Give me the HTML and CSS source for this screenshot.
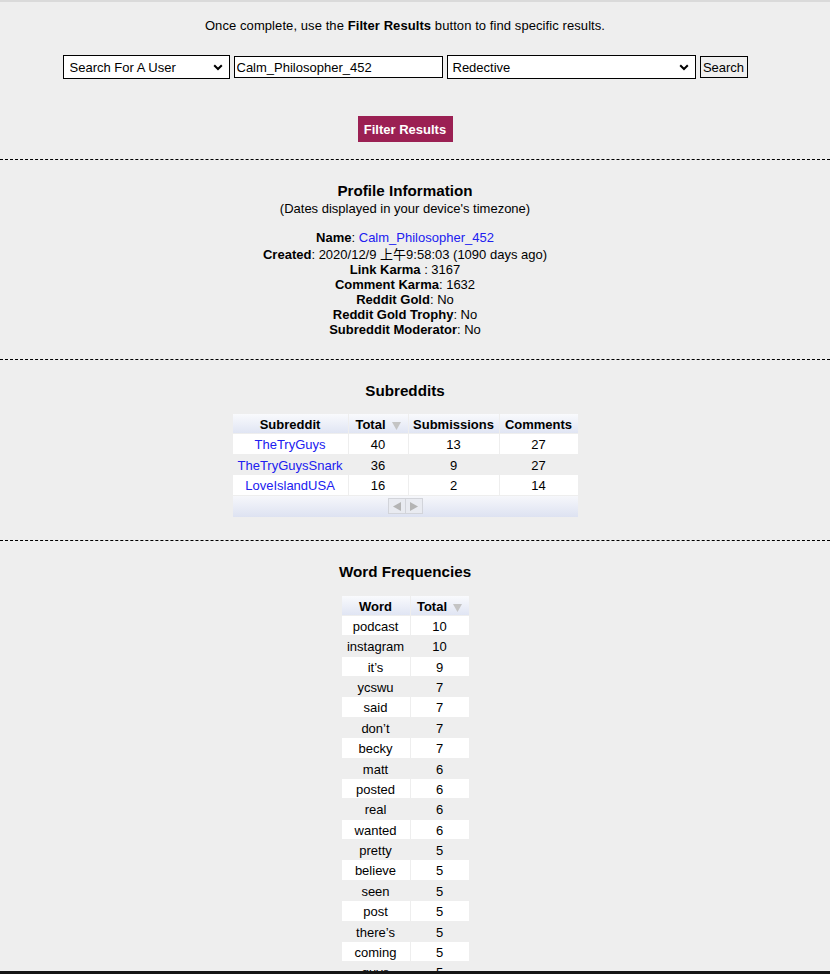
FILE: index.html
```html
<!DOCTYPE html>
<html lang="en">
<head>
<meta charset="utf-8">
<title>User Analysis</title>
<link rel="stylesheet" href="styles.css">
</head>
<body>
<header class="top">
  <p class="intro">Once complete, use the <b>Filter Results</b> button to find specific results.</p>
  <div class="controls">
    <span class="sel sel-mode">
      <select><option>Search For A User</option></select>
      <svg class="chev" width="10" height="7" viewBox="0 0 10 7"><polyline points="1.2,1.2 5,5 8.8,1.2" fill="none" stroke="#000" stroke-width="2"/></svg>
    </span>
    <input class="user" type="text" value="Calm_Philosopher_452">
    <span class="sel sel-sub">
      <select><option>Redective</option></select>
      <svg class="chev" width="10" height="7" viewBox="0 0 10 7"><polyline points="1.2,1.2 5,5 8.8,1.2" fill="none" stroke="#000" stroke-width="2"/></svg>
    </span>
    <button class="search" type="button">Search</button>
  </div>
  <div class="filter-row"><button class="filter" type="button">Filter Results</button></div>
</header>

<section class="section profile">
  <h3>Profile Information</h3>
  <div class="note">(Dates displayed in your device's timezone)</div>
  <div class="kv first"><b>Name</b>: <a href="#">Calm_Philosopher_452</a></div>
  <div class="kv created"><b>Created</b>: 2020/12/9 上午9:58:03 (1090 days ago)</div>
  <div class="kv"><b>Link Karma</b> : 3167</div>
  <div class="kv"><b>Comment Karma</b>: 1632</div>
  <div class="kv"><b>Reddit Gold</b>: No</div>
  <div class="kv"><b>Reddit Gold Trophy</b>: No</div>
  <div class="kv"><b>Subreddit Moderator</b>: No</div>
</section>

<section class="section">
  <h3>Subreddits</h3>
  <table class="grid subs">
    <thead>
      <tr>
        <th class="c1">Subreddit</th>
        <th class="c2">Total<svg class="arrow" width="9" height="8" viewBox="0 0 9 8"><path d="M0 0H9L4.5 8Z" fill="#c4c4c4"/></svg></th>
        <th class="c3">Submissions</th>
        <th class="c4">Comments</th>
      </tr>
    </thead>
    <tbody>
      <tr><td><a href="#">TheTryGuys</a></td><td>40</td><td>13</td><td>27</td></tr>
      <tr><td><a href="#">TheTryGuysSnark</a></td><td>36</td><td>9</td><td>27</td></tr>
      <tr><td><a href="#">LoveIslandUSA</a></td><td>16</td><td>2</td><td>14</td></tr>
    </tbody>
    <tfoot>
      <tr><td colspan="4">
        <div class="pager">
          <span class="pg"><svg width="8" height="9" viewBox="0 0 8 9"><path d="M8 0V9L0 4.5Z" fill="#b4b4b4"/></svg></span>
          <span class="pg"><svg width="8" height="9" viewBox="0 0 8 9"><path d="M0 0V9L8 4.5Z" fill="#b4b4b4"/></svg></span>
        </div>
      </td></tr>
    </tfoot>
  </table>
</section>

<section class="section">
  <h3>Word Frequencies</h3>
  <table class="grid words">
    <thead>
      <tr>
        <th class="w1">Word</th>
        <th class="w2">Total<svg class="arrow" width="9" height="8" viewBox="0 0 9 8"><path d="M0 0H9L4.5 8Z" fill="#c4c4c4"/></svg></th>
      </tr>
    </thead>
    <tbody>
      <tr><td>podcast</td><td>10</td></tr>
      <tr><td>instagram</td><td>10</td></tr>
      <tr><td>it’s</td><td>9</td></tr>
      <tr><td>ycswu</td><td>7</td></tr>
      <tr><td>said</td><td>7</td></tr>
      <tr><td>don’t</td><td>7</td></tr>
      <tr><td>becky</td><td>7</td></tr>
      <tr><td>matt</td><td>6</td></tr>
      <tr><td>posted</td><td>6</td></tr>
      <tr><td>real</td><td>6</td></tr>
      <tr><td>wanted</td><td>6</td></tr>
      <tr><td>pretty</td><td>5</td></tr>
      <tr><td>believe</td><td>5</td></tr>
      <tr><td>seen</td><td>5</td></tr>
      <tr><td>post</td><td>5</td></tr>
      <tr><td>there’s</td><td>5</td></tr>
      <tr><td>coming</td><td>5</td></tr>
      <tr><td>guys</td><td>5</td></tr>
      <tr><td>time</td><td>5</td></tr>
      <tr><td>people</td><td>4</td></tr>
    </tbody>
  </table>
</section>

<div class="bottombar"></div>
</body>
</html>
```

FILE: styles.css
```css
html {
  background: #eeeeee;
}

body {
  margin: 0;
  background: #eeeeee;
  color: #000;
  font-family: "Liberation Sans", Arial, "Noto Sans CJK SC", sans-serif;
  font-size: 13px;
  line-height: 15px;
  border-top: 2px solid #dadada;
}

a {
  color: #2020f0;
  text-decoration: none;
}

/* top area */
.top {
  padding: 16px 20px 17px 0;
  text-align: center;
}

.intro {
  margin: 0;
  line-height: 15px;
  letter-spacing: 0.08px;
}

.controls {
  margin-top: 22px;
  height: 24px;
  display: flex;
  justify-content: center;
  align-items: center;
  gap: 4px;
}

.sel {
  position: relative;
  display: block;
  height: 24px;
}

.sel select {
  appearance: none;
  -webkit-appearance: none;
  display: block;
  height: 24px;
  margin: 0;
  border: 1px solid #000;
  border-radius: 0;
  background: #fff;
  color: #000;
  font-family: "Liberation Sans", Arial, sans-serif;
  font-size: 13px;
  padding: 0 20px 0 5px;
  box-sizing: border-box;
}

.sel-mode select {
  width: 167px;
  padding-left: 6px;
}

.sel-sub select {
  width: 249px;
}

.chev {
  position: absolute;
  right: 7px;
  top: 9px;
  pointer-events: none;
}

.user {
  width: 209px;
  height: 22px;
  box-sizing: border-box;
  margin: 0;
  border: 1px solid #000;
  border-radius: 0;
  padding: 0 2px;
  background: #fff;
  font-family: "Liberation Sans", Arial, sans-serif;
  font-size: 13px;
  color: #000;
}

.search {
  width: 48px;
  height: 22px;
  box-sizing: border-box;
  margin: 0;
  padding: 0;
  border: 1px solid #000;
  border-radius: 0;
  background: #efefef;
  font-family: "Liberation Sans", Arial, sans-serif;
  font-size: 13px;
  color: #000;
}

.filter-row {
  margin-top: 37px;
  display: flex;
  justify-content: center;
}

.filter {
  width: 95px;
  height: 26px;
  margin: 0;
  padding: 0;
  border: 0;
  border-radius: 0;
  background: #9b2053;
  color: #fff;
  font-family: "Liberation Sans", Arial, sans-serif;
  font-size: 13px;
  font-weight: bold;
}

/* sections */
.section {
  border-top: 1px dashed #000;
  padding: 22px 20px 22px 0;
  text-align: center;
}

.section h3 {
  margin: 0;
  font-size: 15.2px;
  line-height: 17px;
  font-weight: bold;
}

.note {
  margin-top: 2px;
  line-height: 15px;
}

.kv {
  line-height: 15px;
}

.kv.first {
  margin-top: 14px;
}

.kv.created {
  padding-top: 2px;
}

/* tables */
.grid {
  margin: 15px auto 0;
  border-collapse: separate;
  border-spacing: 1px;
  table-layout: fixed;
  background: #eeeeee;
}

.grid th,
.grid td {
  box-sizing: border-box;
  padding: 3px 4px 1px;
  line-height: 15.375px;
  font-size: 13px;
  text-align: center;
  white-space: nowrap;
  overflow: hidden;
}

.grid th {
  font-weight: bold;
  background: linear-gradient(#f9fafd, #e0e5f3);
}

.grid tbody tr:nth-child(odd) td {
  background: #fff;
}

.arrow {
  margin-left: 6px;
  vertical-align: -1px;
}

.subs {
  width: 347px;
  margin-top: 14px;
}

.subs .c1 { width: 115px; }
.subs .c2 { width: 59px; }
.subs .c3 { width: 90px; }
.subs .c4 { width: 78px; }

.subs tfoot td {
  height: 21px;
  padding: 0;
  line-height: 0;
  vertical-align: middle;
  background: linear-gradient(#f6f7fb, #dde2f1);
}

.pager {
  display: flex;
  width: fit-content;
  margin: 0 auto;
  border: 1px solid #d2d4da;
  background: #e9ebf1;
}

.pg {
  width: 16px;
  height: 14px;
  display: flex;
  align-items: center;
  justify-content: center;
}

.pg + .pg {
  border-left: 1px solid #d2d4da;
}

.words {
  width: 129px;
}

.words .w1 { width: 68px; }
.words .w2 { width: 58px; }

.bottombar {
  position: fixed;
  left: 0;
  right: 0;
  bottom: 0;
  height: 3px;
  background: #141414;
}
```
